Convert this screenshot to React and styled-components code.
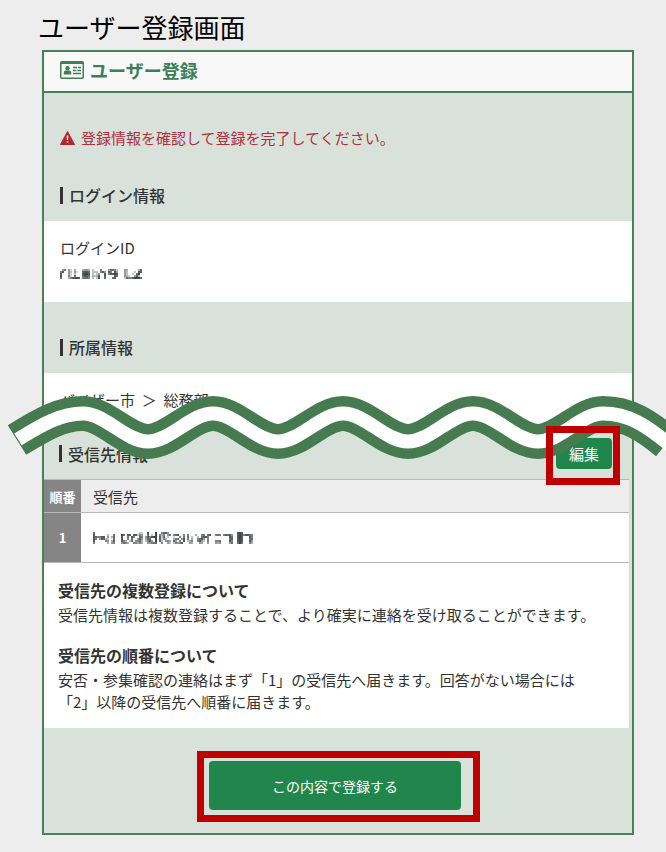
import React from "react";
import styled, { createGlobalStyle } from "styled-components";

const GlobalStyle = createGlobalStyle`
  * {
    box-sizing: border-box;
  }
  body {
    margin: 0;
    background: #ededed;
    color: #333;
    font-family: "Noto Sans CJK JP", "Noto Sans", sans-serif;
    font-size: 15px;
  }
  h1, h2, h3, h4, p {
    margin: 0;
  }
`;

// each digit is the darkness of one mosaic cell, a dot is an empty one
const maskedId = [
  ".57. 52.4.. . 4554 .3. ..6.. . 57763 ... 54.. ...47",
  "68.. 53.52. . 7887 .33 3.685 . 86.85 ... 53.. .3.88",
  "8... 52.3.. . 8998 .3. 35..8 . 68898 ... 53.. 3.79.",
  "8... 62.7.. . 7887 .43 48..8 . ...87 ... 542. .583.",
  "7... 468898 . 6776 .3. 38..7 . ..78. ... 3766 89997",
];

const maskedAddress = [
  "7.. ... ..... ... ......... 3 2..8 ...9 . .6 785. . ...... . ... . ........ .. ... . ..... .. 898 .....",
  "8.. ... .3..7 ... 97.88.883 6 5..7 .3.9 . 64 6.57 . 678..6 . 6.. . 4..67.78 .. 676 . 68785 .. 898 68876",
  "876 688 .5.47 ... 8..7.86.. 7 6.58 6899 . 73 7.3. . 2..6.7 . 7.3 . .3.7886. .. ... . ...87 .. 898 ...86",
  "86. 587 43..7 ... 8..6.7..5 8 5.47 7..9 . 82 64.. . 467.58 . 6.4 . .6785.6. .. ... . ...78 .. 898 ...77",
  "8.. ... 65.48 ... 864.37.56 7 4.36 85.9 . 73 .564 . 75.6.8 . 346 . .6853.6. .. 667 . ...86 .. 898 ...85",
  "6.. ... .4.56 ... 5764..664 6 4..5 5677 . .6 ..53 . 36568. . .54 . ..54..5. .. 545 . ...57 .. 797 ...64",
];

const Mosaic = ({ rows, label }) => {
  const cells = rows.map((row) => row.replace(/ /g, "").split(""));
  const width = cells[0].length * 2;
  const height = cells.length * 2;
  return (
    <MosaicSvg
      role="img"
      aria-label={label}
      width={width}
      height={height}
      viewBox={`0 0 ${width} ${height}`}
    >
      {cells.map((row, y) =>
        row.map((cell, x) =>
          cell === "." ? null : (
            <rect
              key={`${x}-${y}`}
              x={x * 2}
              y={y * 2}
              width="2"
              height="2"
              fill="#2c2f36"
              opacity={cell / 10}
            />
          )
        )
      )}
    </MosaicSvg>
  );
};

const IdCardIcon = () => (
  <svg width="24" height="18" viewBox="0 0 24 18" aria-hidden="true">
    <rect
      x="0.75"
      y="0.75"
      width="22.5"
      height="16.5"
      rx="1"
      fill="none"
      stroke="#3d8058"
      strokeWidth="1.5"
    />
    <path d="M1 1h22v2H1z" fill="#3d8058" />
    <circle cx="7.5" cy="7.2" r="2.2" fill="#3d8058" />
    <path d="M3.8 13.5v-2q0-2 2-2h3.4q2 0 2 2v2z" fill="#3d8058" />
    <path
      d="M13 6.5h4M18 6.5h3M13 9.5h3.5M17.5 9.5h3.5M13 12.5h8"
      stroke="#3d8058"
      strokeWidth="1.3"
    />
  </svg>
);

const WarningIcon = () => (
  <svg width="15" height="14" viewBox="0 0 15 14" aria-hidden="true">
    <path
      d="M7.5 0.5L14.5 13.5H0.5z"
      fill="#b3282f"
      stroke="#b3282f"
      strokeLinejoin="round"
    />
    <path
      d="M6.5 4.5h2l-.4 4.5h-1.2zM6.7 10.2h1.6v1.6h-1.6z"
      fill="#f0cfcf"
    />
  </svg>
);

const wave =
  "c22 0 43 28 65 28s43 -28 65 -28".repeat(4) + "c26 0 44 13 64 29";

const WaveBreak = () => (
  <WaveSvg viewBox="0 390 666 80" preserveAspectRatio="none" aria-hidden="true">
    <path
      d={`M17 440C42 424.5 61 413.5 83 413.5${wave}`}
      fill="none"
      stroke="#467b50"
      strokeWidth="35"
    />
    <path
      d={`M18 439.4C42 424.5 61 413.5 83 413.5${wave}l5 4`}
      fill="none"
      stroke="#fff"
      strokeWidth="14"
    />
  </WaveSvg>
);

const App = () => {
  return (
    <Page>
      <GlobalStyle />
      <PageTitle>ユーザー登録画面</PageTitle>
      <Card>
        <CardHeader>
          <IdCardIcon />
          <h2>ユーザー登録</h2>
        </CardHeader>
        <Alert role="alert">
          <WarningIcon />
          登録情報を確認して登録を完了してください。
        </Alert>
        <section>
          <SectionBar>
            <SectionTitle>ログイン情報</SectionTitle>
          </SectionBar>
          <Box>
            <p>ログインID</p>
            <p>
              <Mosaic rows={maskedId} label="ログインID" />
            </p>
          </Box>
        </section>
        <section>
          <SectionBar>
            <SectionTitle>所属情報</SectionTitle>
          </SectionBar>
          <Box>
            <p>バイザー市&nbsp; ＞&nbsp; 総務部</p>
          </Box>
        </section>
        <Recipients>
          <WaveBreak />
          <SectionBar $compact>
            <SectionTitle>受信先情報</SectionTitle>
            <Callout $inset="-12px -8px -16px -10px">
              <EditButton type="button">編集</EditButton>
            </Callout>
          </SectionBar>
          <Sheet>
            <Table>
              <thead>
                <tr>
                  <th scope="col">順番</th>
                  <th scope="col">受信先</th>
                </tr>
              </thead>
              <tbody>
                <tr>
                  <th scope="row">1</th>
                  <td>
                    <Mosaic rows={maskedAddress} label="受信先" />
                  </td>
                </tr>
              </tbody>
            </Table>
            <Notes>
              <div>
                <h4>受信先の複数登録について</h4>
                <p>
                  受信先情報は複数登録することで、より確実に連絡を受け取ることができます。
                </p>
              </div>
              <div>
                <h4>受信先の順番について</h4>
                <p>
                  安否・参集確認の連絡はまず「1」の受信先へ届きます。回答がない場合には「2」以降の受信先へ順番に届きます。
                </p>
              </div>
            </Notes>
          </Sheet>
        </Recipients>
        <CardFooter>
          <Callout $inset="-10px -19px -12px -12px">
            <SubmitButton type="submit">この内容で登録する</SubmitButton>
          </Callout>
        </CardFooter>
      </Card>
    </Page>
  );
};

const Page = styled.main`
  padding: 8px 32px 17px 42px;
  overflow-x: hidden;
`;

const PageTitle = styled.h1`
  margin: 0 0 4px -4px;
  color: #000;
  font-size: 26px;
  font-weight: 400;
  line-height: 38px;
`;

const Card = styled.div`
  border: 2px solid #48805a;
  background: #d9e2da;
`;

const CardHeader = styled.header`
  display: flex;
  align-items: center;
  gap: 6px;
  height: 41px;
  padding: 0 16px 4px;
  background: #f7f8f7;
  border-bottom: 2px solid #48805a;

  h2 {
    color: #3d8058;
    font-size: 18px;
    font-weight: 700;
    line-height: 24px;
  }
`;

const Alert = styled.p`
  display: flex;
  align-items: center;
  gap: 6px;
  padding: 33px 16px 0;
  color: #b02f3a;
  line-height: 24px;
`;

const SectionBar = styled.div`
  display: flex;
  align-items: center;
  justify-content: space-between;
  padding: ${({ $compact }) =>
    $compact ? "10px 20px 10px 15px" : "33px 16px 14px"};
`;

const SectionTitle = styled.h3`
  display: flex;
  align-items: center;
  gap: 6px;
  font-size: 16px;
  font-weight: 500;
  line-height: 24px;

  &::before {
    content: "";
    width: 3px;
    height: 17px;
    background: #333;
  }
`;

const Box = styled.div`
  padding: 14px 16px 15px;
  background: #fff;
  line-height: 26px;

  p {
    display: flex;
    align-items: center;
    min-height: 26px;
  }
`;

const MosaicSvg = styled.svg`
  display: block;
`;

const Recipients = styled.section`
  position: relative;
`;

/* runs past both sides of the card */
const WaveSvg = styled.svg`
  position: absolute;
  z-index: 1;
  top: -38px;
  left: -44px;
  width: calc(100% + 78px);
  height: 80px;
  pointer-events: none;
`;

const Callout = styled.div`
  position: relative;

  &::after {
    content: "";
    position: absolute;
    z-index: 2;
    inset: ${({ $inset }) => $inset};
    border: 7px solid #c00000;
    pointer-events: none;
  }
`;

const Button = styled.button`
  display: block;
  border: 0;
  border-radius: 4px;
  background: #20864b;
  color: #fff;
  font-family: inherit;
  cursor: pointer;
`;

const EditButton = styled(Button)`
  width: 56px;
  height: 31px;
  padding: 0;
  font-size: 15px;
`;

const SubmitButton = styled(Button)`
  width: 252px;
  height: 49px;
  font-size: 14px;
`;

const Sheet = styled.div`
  margin-right: 3px;
  background: #fff;
`;

const Table = styled.table`
  width: 100%;
  border-collapse: collapse;
  border-top: 1px solid #b5b8b5;

  tr {
    height: 33px;
    border-bottom: 1px solid #b5b8b5;
  }
  tbody tr {
    height: 50px;
  }
  th,
  td {
    padding: 0 12px;
    font-weight: 400;
    text-align: left;
  }
  thead th {
    background: #ededed;
  }
  tr th:first-child {
    width: 37px;
    padding: 0;
    background: #858585;
    color: #fff;
    font-size: 13px;
    font-weight: 700;
    text-align: center;
  }
`;

const Notes = styled.div`
  display: grid;
  gap: 17px;
  padding: 15px 24px 15px 14px;

  h4 {
    margin-bottom: 2px;
    font-size: 16px;
    font-weight: 700;
    line-height: 24px;
  }
  p {
    line-height: 22px;
  }
`;

const CardFooter = styled.footer`
  display: flex;
  justify-content: center;
  padding: 33px 6px 23px 0;
`;

export default App;
